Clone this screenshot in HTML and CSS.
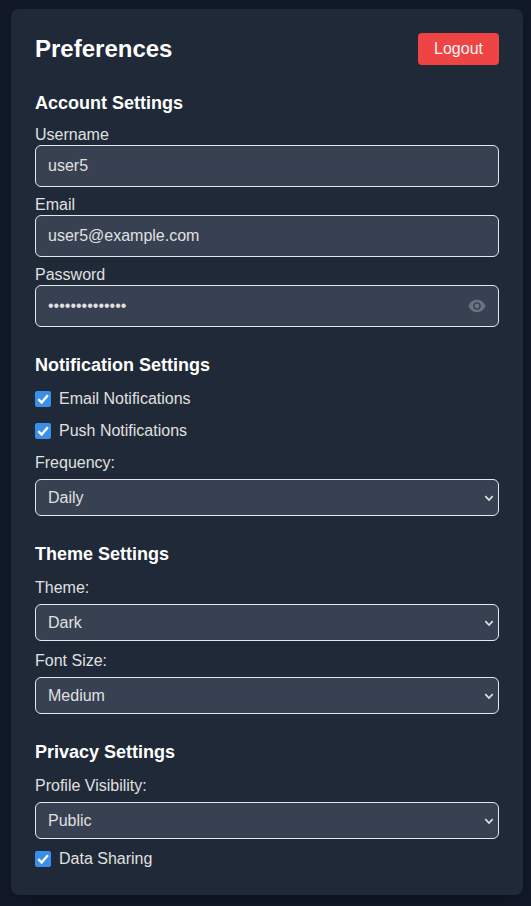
FILE: index.html
```html
<!DOCTYPE html>
<html lang="en">
<head>
<meta charset="utf-8">
<title>Preferences</title>
<link rel="stylesheet" href="styles.css">
</head>
<body>
<main class="card">
  <header class="head"><h1>Preferences</h1><button class="logout">Logout</button></header>
  <section>
    <h2>Account Settings</h2>
    <div class="field"><label for="user">Username</label><input class="control" id="user" type="text" value="user5"></div>
    <div class="field"><label for="email">Email</label><input class="control" id="email" type="email" value="user5@example.com"></div>
    <div class="field"><label for="pass">Password</label>
      <div class="wrap"><input class="control" id="pass" type="password" value="abcdefghijklmn">
        <svg class="eye" viewBox="0 0 18 14"><path fill="currentColor" fill-rule="evenodd" d="M9 .8C5 .8 1.900 3.500.5 7c1.400 3.500 4.500 6.200 8.500 6.200s7.100-2.700 8.500-6.200C16.100 3.500 13 .8 9 .8zM9 3.200a3.800 3.800 0 1 1 0 7.600a3.800 3.800 0 0 1 0-7.600zM9 4.600a2.400 2.400 0 1 0 0 4.800a2.400 2.400 0 0 0 0-4.800z"/></svg>
      </div>
    </div>
  </section>
  <section>
    <h2>Notification Settings</h2>
    <label class="check"><span class="box"><input type="checkbox" checked><svg viewBox="0 0 16 16"><path d="M3.300 8.200l3.300 3.300L12.900 4.300"/></svg></span>Email Notifications</label>
    <label class="check"><span class="box"><input type="checkbox" checked><svg viewBox="0 0 16 16"><path d="M3.300 8.200l3.300 3.300L12.900 4.300"/></svg></span>Push Notifications</label>
    <label class="caption" for="freq">Frequency:</label>
    <div class="wrap"><select class="control select" id="freq"><option>Daily</option></select><svg class="chevron" viewBox="0 0 10 7"><path d="M1.300 1.200L5 5l3.700-3.800"/></svg></div>
  </section>
  <section>
    <h2>Theme Settings</h2>
    <label class="caption" for="theme">Theme:</label>
    <div class="wrap"><select class="control select" id="theme"><option>Dark</option></select><svg class="chevron" viewBox="0 0 10 7"><path d="M1.300 1.200L5 5l3.700-3.800"/></svg></div>
    <label class="caption" for="size">Font Size:</label>
    <div class="wrap"><select class="control select" id="size"><option>Medium</option></select><svg class="chevron" viewBox="0 0 10 7"><path d="M1.300 1.200L5 5l3.700-3.800"/></svg></div>
  </section>
  <section>
    <h2>Privacy Settings</h2>
    <label class="caption" for="vis">Profile Visibility:</label>
    <div class="wrap"><select class="control select" id="vis"><option>Public</option></select><svg class="chevron" viewBox="0 0 10 7"><path d="M1.300 1.200L5 5l3.700-3.800"/></svg></div>
    <label class="check"><span class="box"><input type="checkbox" checked><svg viewBox="0 0 16 16"><path d="M3.300 8.200l3.300 3.300L12.900 4.300"/></svg></span>Data Sharing</label>
  </section>
</main>
</body>
</html>
```
FILE: styles.css
```css
* { box-sizing: border-box; margin: 0; padding: 0; }
body { background: #111827; color: #e0e0e0; font: 16px/24px "Liberation Sans", Arial, sans-serif; padding: 9px 8px 11px 11px; }
.card { background: #1f2937; border-radius: 8px; padding: 24px; height: 886px; box-shadow: 0 10px 15px -3px rgba(0, 0, 0, .1), 0 4px 6px -4px rgba(0, 0, 0, .1); }
.head { display: flex; justify-content: space-between; align-items: center; height: 32px; margin-bottom: 24px; }
h1 { font-size: 24px; line-height: 32px; color: #fff; }
h2 { font-size: 18px; line-height: 28px; color: #fff; margin-bottom: 8px; }
.logout { width: 81px; height: 32px; border: 0; border-radius: 4px; background: #ef4444; color: #f3f4f6; font: inherit; }
section { margin-bottom: 24px; }
.field { line-height: 20px; margin-bottom: 8px; }
.field label { display: block; }
.control { display: block; width: 100%; height: 42px; padding: 8px 12px; border: 1px solid #e5e7eb; border-radius: 6px; background: #374151; color: #e0e0e0; font: inherit; line-height: 24px; }
.wrap { position: relative; }
.eye { position: absolute; right: 13px; top: 14px; width: 18px; height: 14px; color: #6b7280; }
.check { display: flex; align-items: center; gap: 8px; height: 24px; margin-bottom: 8px; }
.box { position: relative; width: 16px; height: 16px; }
.box input { display: block; appearance: none; width: 16px; height: 16px; border-radius: 2px; background: #3b8eea; }
.box svg { position: absolute; inset: 0; fill: none; stroke: #fff; stroke-width: 2.4; }
.caption { display: block; margin-bottom: 4px; }
.select { appearance: none; height: 37px; padding: 0 12px; margin-bottom: 8px; }
.chevron { position: absolute; right: 5px; top: 16px; width: 10px; height: 7px; fill: none; stroke: #e0e0e0; stroke-width: 1.7; pointer-events: none; }
```
